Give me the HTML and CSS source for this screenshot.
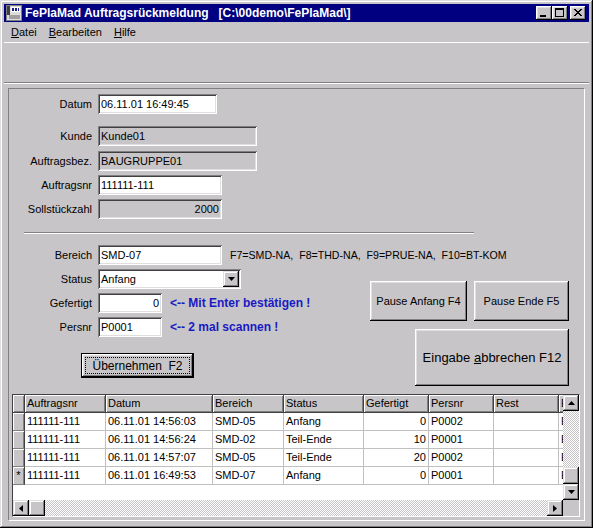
FILE: index.html
```html
<!DOCTYPE html>
<html>
<head>
    <meta charset="utf-8">
    <link rel="stylesheet" href="styles.css">
</head>
<body>
    <div class="window">
        <div class="titlebar">
            <svg class="titlebar__icon" width="16" height="16" viewBox="0 0 16 16">
                <rect x="0" y="0" width="16" height="16" fill="#808080"/>
                <rect x="1" y="1" width="14" height="14" fill="#dcdcdc"/>
                <rect x="1" y="1" width="3" height="9" fill="#404040"/>
                <rect x="5" y="2" width="9" height="5" fill="#fff"/>
                <rect x="6" y="3" width="2" height="3" fill="#1a1a90"/>
                <rect x="9" y="3" width="2" height="3" fill="#1a1a90"/>
                <rect x="12" y="3" width="1" height="3" fill="#1a1a90"/>
                <rect x="3" y="10" width="11" height="4" fill="#a0a0a0"/>
            </svg>
            <span class="titlebar__text">FePlaMad Auftragsrückmeldung   [C:\00demo\FePlaMad\]</span>
            <div class="titlebar__buttons">
                <span class="winbtn">
                    <svg width="16" height="14" viewBox="0 0 16 14"><rect x="4" y="9" width="6" height="2" fill="#000"/></svg>
                </span>
                <span class="winbtn">
                    <svg width="16" height="14" viewBox="0 0 16 14"><rect x="3.5" y="2.5" width="8" height="8" fill="none" stroke="#000"/><rect x="3" y="2" width="9" height="2" fill="#000"/></svg>
                </span>
                <span class="winbtn winbtn--close">
                    <svg width="16" height="14" viewBox="0 0 16 14"><path d="M4 3 L11 10 M5 3 L12 10 M11 3 L4 10 M12 3 L5 10" stroke="#000" stroke-width="1"/></svg>
                </span>
            </div>
        </div>

        <div class="menubar">
            <span class="menubar__item"><u>D</u>atei</span>
            <span class="menubar__item"><u>B</u>earbeiten</span>
            <span class="menubar__item"><u>H</u>ilfe</span>
        </div>

        <div class="toolbar"></div>

        <div class="panel">
            <div class="field field--datum">
                <span class="field__label">Datum</span>
                <div class="input input--w119">06.11.01 16:49:45</div>
            </div>
            <div class="field field--kunde">
                <span class="field__label">Kunde</span>
                <div class="input input--readonly input--w159">Kunde01</div>
            </div>
            <div class="field field--tight">
                <span class="field__label">Auftragsbez.</span>
                <div class="input input--readonly input--w159">BAUGRUPPE01</div>
            </div>
            <div class="field">
                <span class="field__label">Auftragsnr</span>
                <div class="input input--w124">111111-111</div>
            </div>
            <div class="field">
                <span class="field__label">Sollstückzahl</span>
                <div class="input input--readonly input--w124 input--num">2000</div>
            </div>

            <div class="separator"></div>

            <div class="field field--bereich">
                <span class="field__label">Bereich</span>
                <div class="input input--w124">SMD-07</div>
                <span class="field__hint">F7=SMD-NA,  F8=THD-NA,  F9=PRUE-NA,  F10=BT-KOM</span>
            </div>

            <div class="entry">
                <div class="entry__left">
                    <div class="field field--first">
                        <span class="field__label">Status</span>
                        <div class="input input--w143 combo">
                            <span class="combo__value">Anfang</span>
                            <span class="combo__button">
                                <svg width="7" height="4" viewBox="0 0 7 4"><path d="M0 0 H7 L3.5 4 Z" fill="#000"/></svg>
                            </span>
                        </div>
                    </div>
                    <div class="field">
                        <span class="field__label">Gefertigt</span>
                        <div class="input input--w64 input--num">0</div>
                        <span class="field__note">&lt;-- Mit Enter bestätigen !</span>
                    </div>
                    <div class="field">
                        <span class="field__label">Persnr</span>
                        <div class="input input--w64">P0001</div>
                        <span class="field__note">&lt;-- 2 mal scannen !</span>
                    </div>
                    <div class="button button--default button--apply">
                        <span class="button__focus">Übernehmen  F2</span>
                    </div>
                </div>
                <div class="entry__right">
                    <div class="entry__pause">
                        <div class="button button--pause-start">Pause Anfang F4</div>
                        <div class="button button--pause-end">Pause Ende F5</div>
                    </div>
                    <div class="button button--cancel">Eingabe <u>a</u>bbrechen F12</div>
                </div>
            </div>

            <div class="grid">
                <div class="grid__data">
                    <div class="grid__row grid__row--head">
                        <div class="cell cell--ind"></div>
                        <div class="cell cell--nr">Auftragsnr</div>
                        <div class="cell cell--datum">Datum</div>
                        <div class="cell cell--bereich">Bereich</div>
                        <div class="cell cell--status">Status</div>
                        <div class="cell cell--menge">Gefertigt</div>
                        <div class="cell cell--pers">Persnr</div>
                        <div class="cell cell--rest">Rest</div>
                        <div class="cell cell--extra">E</div>
                    </div>
                    <div class="grid__row">
                        <div class="cell cell--ind"></div>
                        <div class="cell cell--nr">111111-111</div>
                        <div class="cell cell--datum">06.11.01 14:56:03</div>
                        <div class="cell cell--bereich">SMD-05</div>
                        <div class="cell cell--status">Anfang</div>
                        <div class="cell cell--menge">0</div>
                        <div class="cell cell--pers">P0002</div>
                        <div class="cell cell--rest"></div>
                        <div class="cell cell--extra">E</div>
                    </div>
                    <div class="grid__row">
                        <div class="cell cell--ind"></div>
                        <div class="cell cell--nr">111111-111</div>
                        <div class="cell cell--datum">06.11.01 14:56:24</div>
                        <div class="cell cell--bereich">SMD-02</div>
                        <div class="cell cell--status">Teil-Ende</div>
                        <div class="cell cell--menge">10</div>
                        <div class="cell cell--pers">P0001</div>
                        <div class="cell cell--rest"></div>
                        <div class="cell cell--extra">E</div>
                    </div>
                    <div class="grid__row">
                        <div class="cell cell--ind"></div>
                        <div class="cell cell--nr">111111-111</div>
                        <div class="cell cell--datum">06.11.01 14:57:07</div>
                        <div class="cell cell--bereich">SMD-05</div>
                        <div class="cell cell--status">Teil-Ende</div>
                        <div class="cell cell--menge">20</div>
                        <div class="cell cell--pers">P0002</div>
                        <div class="cell cell--rest"></div>
                        <div class="cell cell--extra">E</div>
                    </div>
                    <div class="grid__row">
                        <div class="cell cell--ind">*</div>
                        <div class="cell cell--nr">111111-111</div>
                        <div class="cell cell--datum">06.11.01 16:49:53</div>
                        <div class="cell cell--bereich">SMD-07</div>
                        <div class="cell cell--status">Anfang</div>
                        <div class="cell cell--menge">0</div>
                        <div class="cell cell--pers">P0001</div>
                        <div class="cell cell--rest"></div>
                        <div class="cell cell--extra">E</div>
                    </div>
                </div>

                <div class="vscroll">
                    <span class="sbtn">
                        <svg width="7" height="4" viewBox="0 0 7 4"><path d="M3.5 0 L7 4 H0 Z" fill="#000"/></svg>
                    </span>
                    <span class="track"></span>
                    <span class="sbtn sbtn--thumb-v"></span>
                    <span class="sbtn">
                        <svg width="7" height="4" viewBox="0 0 7 4"><path d="M0 0 H7 L3.5 4 Z" fill="#000"/></svg>
                    </span>
                </div>
                <div class="hscroll">
                    <span class="sbtn">
                        <svg width="4" height="7" viewBox="0 0 4 7"><path d="M4 0 V7 L0 3.5 Z" fill="#000"/></svg>
                    </span>
                    <span class="sbtn"></span>
                    <span class="track"></span>
                    <span class="sbtn">
                        <svg width="4" height="7" viewBox="0 0 4 7"><path d="M0 0 V7 L4 3.5 Z" fill="#000"/></svg>
                    </span>
                </div>
                <div class="grid__corner"></div>
            </div>
        </div>
    </div>
</body>
</html>
```

FILE: styles.css
```css
body {
    margin: 0;
    padding: 0;
    background: #c8c5c8;
    color: #000;
    font-family: "Liberation Sans", Arial, sans-serif;
    font-size: 11px;
}

.window {
    box-sizing: border-box;
    width: 593px;
    height: 528px;
    padding: 4px;
    display: flex;
    flex-direction: column;
    background: #c8c5c8;
    box-shadow: inset -1px -1px #000, inset 1px 1px #dfdfdf,
                inset -2px -2px #808080, inset 2px 2px #fff;
}

/* title bar */
.titlebar {
    height: 18px;
    display: flex;
    align-items: center;
    background: #000080;
    color: #fff;
}
.titlebar__icon {
    margin-left: 2px;
    flex: none;
}
.titlebar__text {
    margin-left: 3px;
    font-weight: bold;
    font-size: 12px;
    white-space: pre;
}
.titlebar__buttons {
    margin-left: auto;
    margin-right: 3px;
    display: flex;
}
.winbtn {
    width: 16px;
    height: 14px;
    background: #c8c5c8;
    box-shadow: inset -1px -1px #000, inset 1px 1px #fff,
                inset -2px -2px #808080, inset 2px 2px #dfdfdf;
}
.winbtn svg {
    display: block;
}
.winbtn--close {
    margin-left: 2px;
}

/* menu */
.menubar {
    height: 20px;
    display: flex;
    align-items: center;
    padding-left: 1px;
}
.menubar__item {
    padding: 0 6px;
}

.toolbar {
    height: 40px;
    border-top: 1px solid #fff;
    border-bottom: 1px solid #fff;
    box-shadow: inset 0 -1px #808080;
}

/* main panel */
.panel {
    flex: 1;
    margin: 4px 4px 3px;
    display: flex;
    flex-direction: column;
    border: 1px solid;
    border-color: #808080 #fff #fff #808080;
}

.field {
    display: flex;
    align-items: center;
    height: 20px;
    margin-top: 4px;
}
.field--datum {
    margin-top: 5px;
}
.field--kunde {
    margin-top: 12px;
}
.field--tight {
    margin-top: 5px;
}
.field--bereich {
    margin-top: 11px;
}
.field--first {
    margin-top: 0;
}
.field__label {
    width: 83px;
    margin-right: 6px;
    text-align: right;
    flex: none;
}
.field__hint {
    margin-left: 8px;
    font-size: 10.6px;
    white-space: pre;
}
.field__note {
    margin-left: 8px;
    color: #1a1ac4;
    font-weight: bold;
    font-size: 12px;
    white-space: pre;
}

.input {
    box-sizing: border-box;
    height: 20px;
    line-height: 20px;
    padding: 0 3px;
    flex: none;
    background: #fff;
    white-space: nowrap;
    box-shadow: inset 1px 1px #808080, inset -1px -1px #fff,
                inset 2px 2px #404040, inset -2px -2px #dfdfdf;
}
.input--readonly {
    background: transparent;
}
.input--num {
    text-align: right;
}
.input--w64 { width: 64px; }
.input--w119 { width: 119px; }
.input--w124 { width: 124px; }
.input--w143 { width: 143px; }
.input--w159 { width: 159px; }

.combo {
    display: flex;
    align-items: center;
    padding-right: 2px;
}
.combo__value {
    flex: 1;
}
.combo__button {
    width: 16px;
    height: 16px;
    display: flex;
    align-items: center;
    justify-content: center;
    background: #c8c5c8;
    box-shadow: inset -1px -1px #000, inset 1px 1px #dfdfdf,
                inset -2px -2px #808080, inset 2px 2px #fff;
}

.separator {
    margin: 13px 0 0 15px;
    width: 450px;
    border-top: 1px solid #808080;
    border-bottom: 1px solid #fff;
}

/* lower entry area */
.entry {
    display: flex;
    justify-content: space-between;
    align-items: flex-start;
    margin-top: 4px;
}
.entry__right {
    margin-top: 12px;
    margin-right: 15px;
    display: flex;
    flex-direction: column;
    align-items: flex-end;
}
.entry__pause {
    display: flex;
    gap: 7px;
}

.button {
    box-sizing: border-box;
    display: flex;
    align-items: center;
    justify-content: center;
    background: #c8c5c8;
    white-space: pre;
    box-shadow: inset -1px -1px #000, inset 1px 1px #fff,
                inset -2px -2px #808080, inset 2px 2px #dfdfdf;
}
.button--default {
    border: 1px solid #000;
}
.button--apply {
    width: 113px;
    height: 25px;
    margin: 16px 0 0 72px;
    font-size: 12px;
    padding: 3px;
    align-items: stretch;
}
.button__focus {
    flex: 1;
    display: flex;
    align-items: center;
    justify-content: center;
    border: 1px dotted #000;
}
.button--pause-start {
    width: 97px;
    height: 40px;
}
.button--pause-end {
    width: 95px;
    height: 40px;
}
.button--cancel {
    width: 154px;
    height: 57px;
    margin-top: 8px;
    font-size: 13px;
}

/* data grid */
.grid {
    flex: 1;
    margin: 8px 4px 3px 3px;
    display: grid;
    grid-template-columns: 1fr 16px;
    grid-template-rows: 1fr 16px;
    border: 1px solid;
    border-color: #404040 #fff #fff #404040;
    background: #c8c5c8;
}
.grid__data {
    overflow: hidden;
    background: #fff;
}
.grid__row {
    display: flex;
}
.cell {
    box-sizing: border-box;
    flex: none;
    height: 18px;
    line-height: 17px;
    padding: 0 2px;
    border-right: 1px solid #c0c0c0;
    border-bottom: 1px solid #c0c0c0;
    white-space: nowrap;
    overflow: hidden;
}
.grid__row--head .cell {
    background: #c8c5c8;
    text-align: left;
    border-right-color: #404040;
    border-bottom-color: #404040;
    box-shadow: inset 1px 1px #fff, inset -1px -1px #808080;
}
.cell--ind {
    width: 12px;
    padding: 0;
    text-align: center;
    background: #c8c5c8;
    border-right-color: #404040;
    border-bottom-color: #808080;
    box-shadow: inset 1px 1px #fff, inset -1px 0 #808080;
}
.cell--nr { width: 81px; }
.cell--datum { width: 107px; }
.cell--bereich { width: 71px; }
.cell--status { width: 80px; }
.cell--menge { width: 65px; text-align: right; }
.cell--pers { width: 65px; }
.cell--rest { width: 65px; }
.cell--extra { width: 60px; }

.vscroll {
    display: flex;
    flex-direction: column;
}
.hscroll {
    display: flex;
}
.sbtn {
    width: 16px;
    height: 16px;
    flex: none;
    display: flex;
    align-items: center;
    justify-content: center;
    background: #c8c5c8;
    box-shadow: inset -1px -1px #000, inset 1px 1px #dfdfdf,
                inset -2px -2px #808080, inset 2px 2px #fff;
}
.sbtn--thumb-v {
    height: 17px;
}
.track {
    flex: 1;
    background-image: repeating-conic-gradient(#fff 0 25%, #c8c5c8 0 50%);
    background-size: 2px 2px;
}
.grid__corner {
    background: #c8c5c8;
}
```
